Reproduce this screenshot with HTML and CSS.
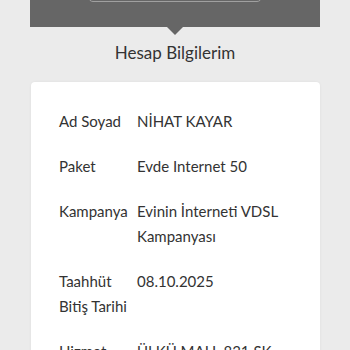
FILE: index.html
```html
<!DOCTYPE html>
<html lang="tr">
<head>
<meta charset="utf-8">
<link rel="stylesheet" href="styles.css">
</head>
<body>
<div class="panel">
  <div class="panel-btn"></div>
</div>
<h1 class="title">Hesap Bilgilerim</h1>
<div class="card">
  <div class="row"><div class="label">Ad Soyad</div><div class="value">NİHAT KAYAR</div></div>
  <div class="row"><div class="label">Paket</div><div class="value">Evde Internet 50</div></div>
  <div class="row"><div class="label">Kampanya</div><div class="value">Evinin İnterneti VDSL Kampanyası</div></div>
  <div class="row"><div class="label">Taahhüt Bitiş Tarihi</div><div class="value">08.10.2025</div></div>
  <div class="row"><div class="label">Hizmet Adresi</div><div class="value">ÜLKÜ MAH. 831 SK. NO:</div></div>
</div>
</body>
</html>
```
FILE: styles.css
```css
html, body {
  margin: 0;
  padding: 0;
  background: #ebebeb;
  font-family: "Lato", "Open Sans", sans-serif;
  color: #333;
  overflow: hidden;
}
.panel {
  position: relative;
  margin: 0 30px;
  height: 27px;
  background: #666;
  display: flex;
  justify-content: center;
}
.panel::after {
  content: "";
  position: absolute;
  left: 50%;
  top: 27px;
  margin-left: -8px;
  border-left: 8px solid transparent;
  border-right: 8px solid transparent;
  border-top: 8px solid #666;
}
.panel-btn {
  margin-top: -30px;
  width: 172px;
  height: 30px;
  border: 1px solid #a0a0a0;
  border-radius: 5px;
}
.title {
  margin: 0;
  padding-top: 13px;
  height: 42px;
  font-size: 17px;
  line-height: 26px;
  font-weight: 400;
  text-align: center;
  color: #333;
}
.card {
  margin: 0 30px 0 31px;
  background: #fff;
  border-radius: 4px;
  box-shadow: 0 0 3px rgba(0,0,0,0.06);
  padding: 27px 20px 20px 28px;
  display: flex;
  flex-direction: column;
  gap: 20px;
}
.row {
  display: flex;
  font-size: 15px;
  line-height: 25px;
}
.label {
  width: 78px;
  flex: none;
}
.value {
  flex: 1;
}
```
